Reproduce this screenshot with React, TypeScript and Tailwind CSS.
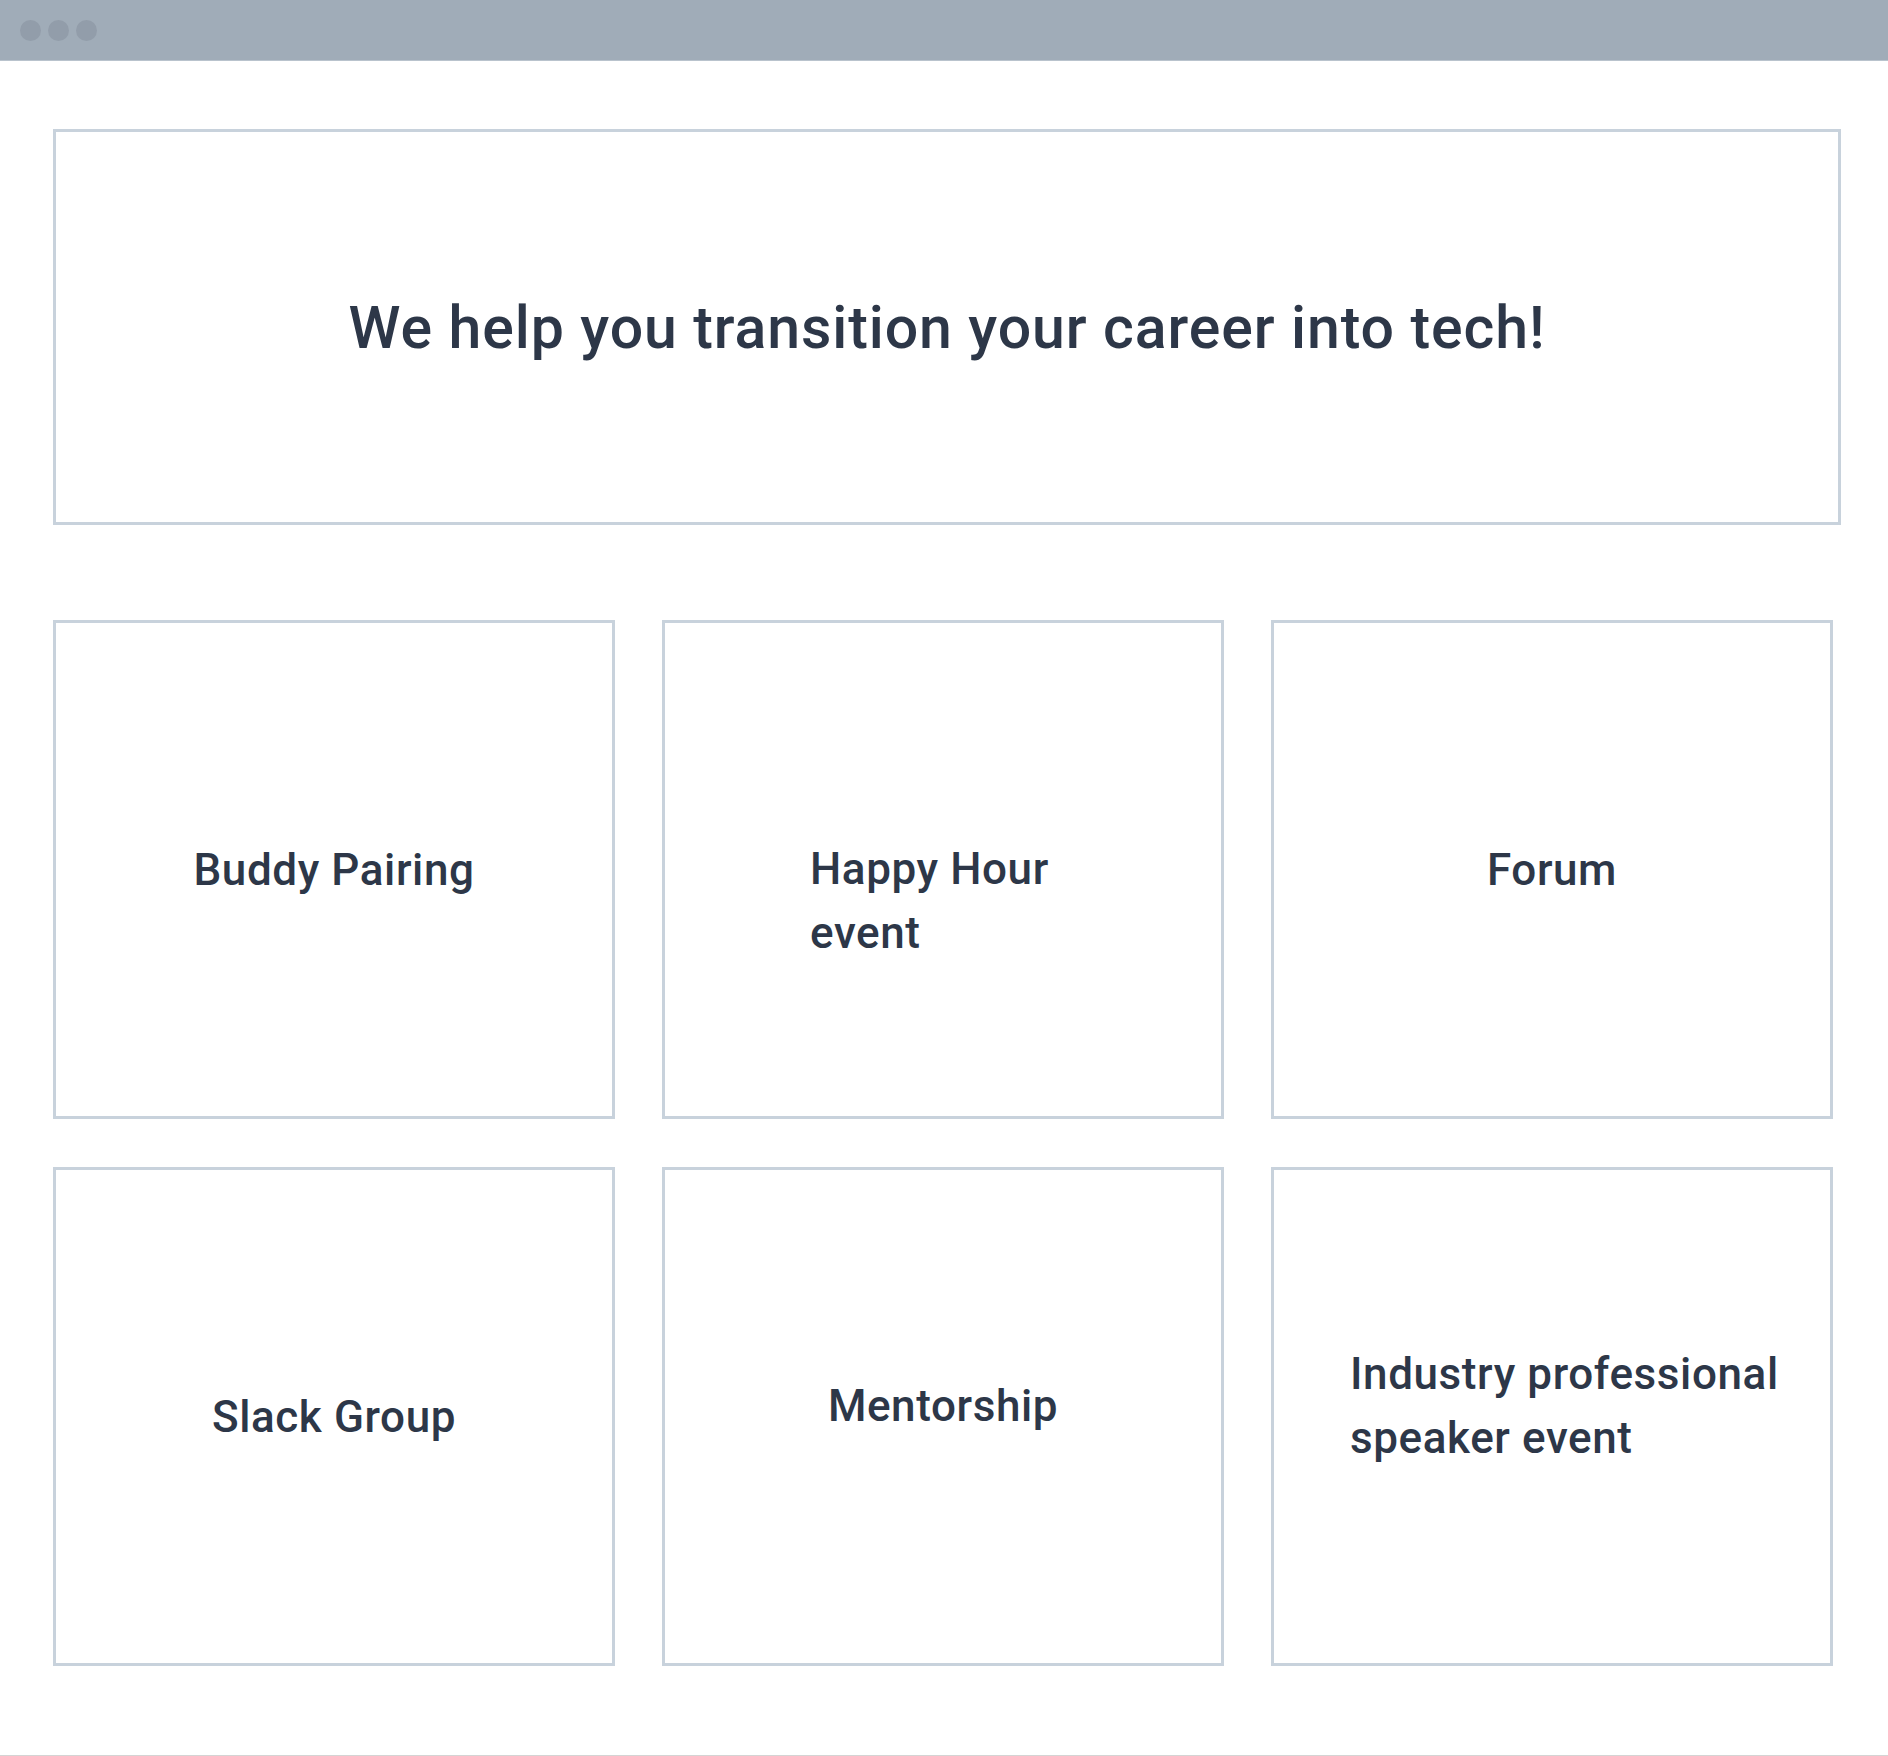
const cards = [
  { label: 'Buddy Pairing', box: 'items-center justify-center', text: '' },
  { label: 'Happy Hour event', box: 'items-start justify-start pt-[214px] pl-[145px]', text: 'w-[265px]' },
  { label: 'Forum', box: 'items-center justify-center', text: '' },
  { label: 'Slack Group', box: 'items-center justify-center', text: '' },
  { label: 'Mentorship', box: 'items-center justify-center pb-[22px]', text: '' },
  { label: 'Industry professional speaker event', box: 'items-start justify-start pt-[172px] pl-[76px]', text: 'w-[460px]' },
];

export default function App() {
  return (
    <div className="min-h-[1756px] w-[1888px] flex flex-col bg-white border-b border-[#d4d4d4] font-['Roboto',sans-serif] text-[#2d3748]">
      <div className="h-[61px] bg-[#a0acb8] flex items-center gap-[7px] pl-[20px] border-b border-[#b9c3cd]">
        <span className="w-[21px] h-[21px] rounded-full bg-[#929daa]" />
        <span className="w-[21px] h-[21px] rounded-full bg-[#929daa]" />
        <span className="w-[21px] h-[21px] rounded-full bg-[#929daa]" />
      </div>

      <main className="pl-[53px] pt-[68px] flex-1">
        <section className="w-[1788px] h-[396px] border-[3px] border-[#c8d2dc] flex items-center justify-center">
          <h1 className="text-[59px] font-medium leading-none tracking-[0.9px]">
            We help you transition your career into tech!
          </h1>
        </section>

        <div className="mt-[95px] w-[1780px] grid grid-cols-3 gap-x-[47px] gap-y-[48px]">
          {cards.map((c) => (
            <div
              key={c.label}
              className={`h-[499px] border-[3px] border-[#c8d2dc] flex ${c.box}`}
            >
              <p className={`text-[44px] font-medium leading-[64px] tracking-[0.6px] ${c.text}`}>{c.label}</p>
            </div>
          ))}
        </div>
      </main>
    </div>
  );
}
